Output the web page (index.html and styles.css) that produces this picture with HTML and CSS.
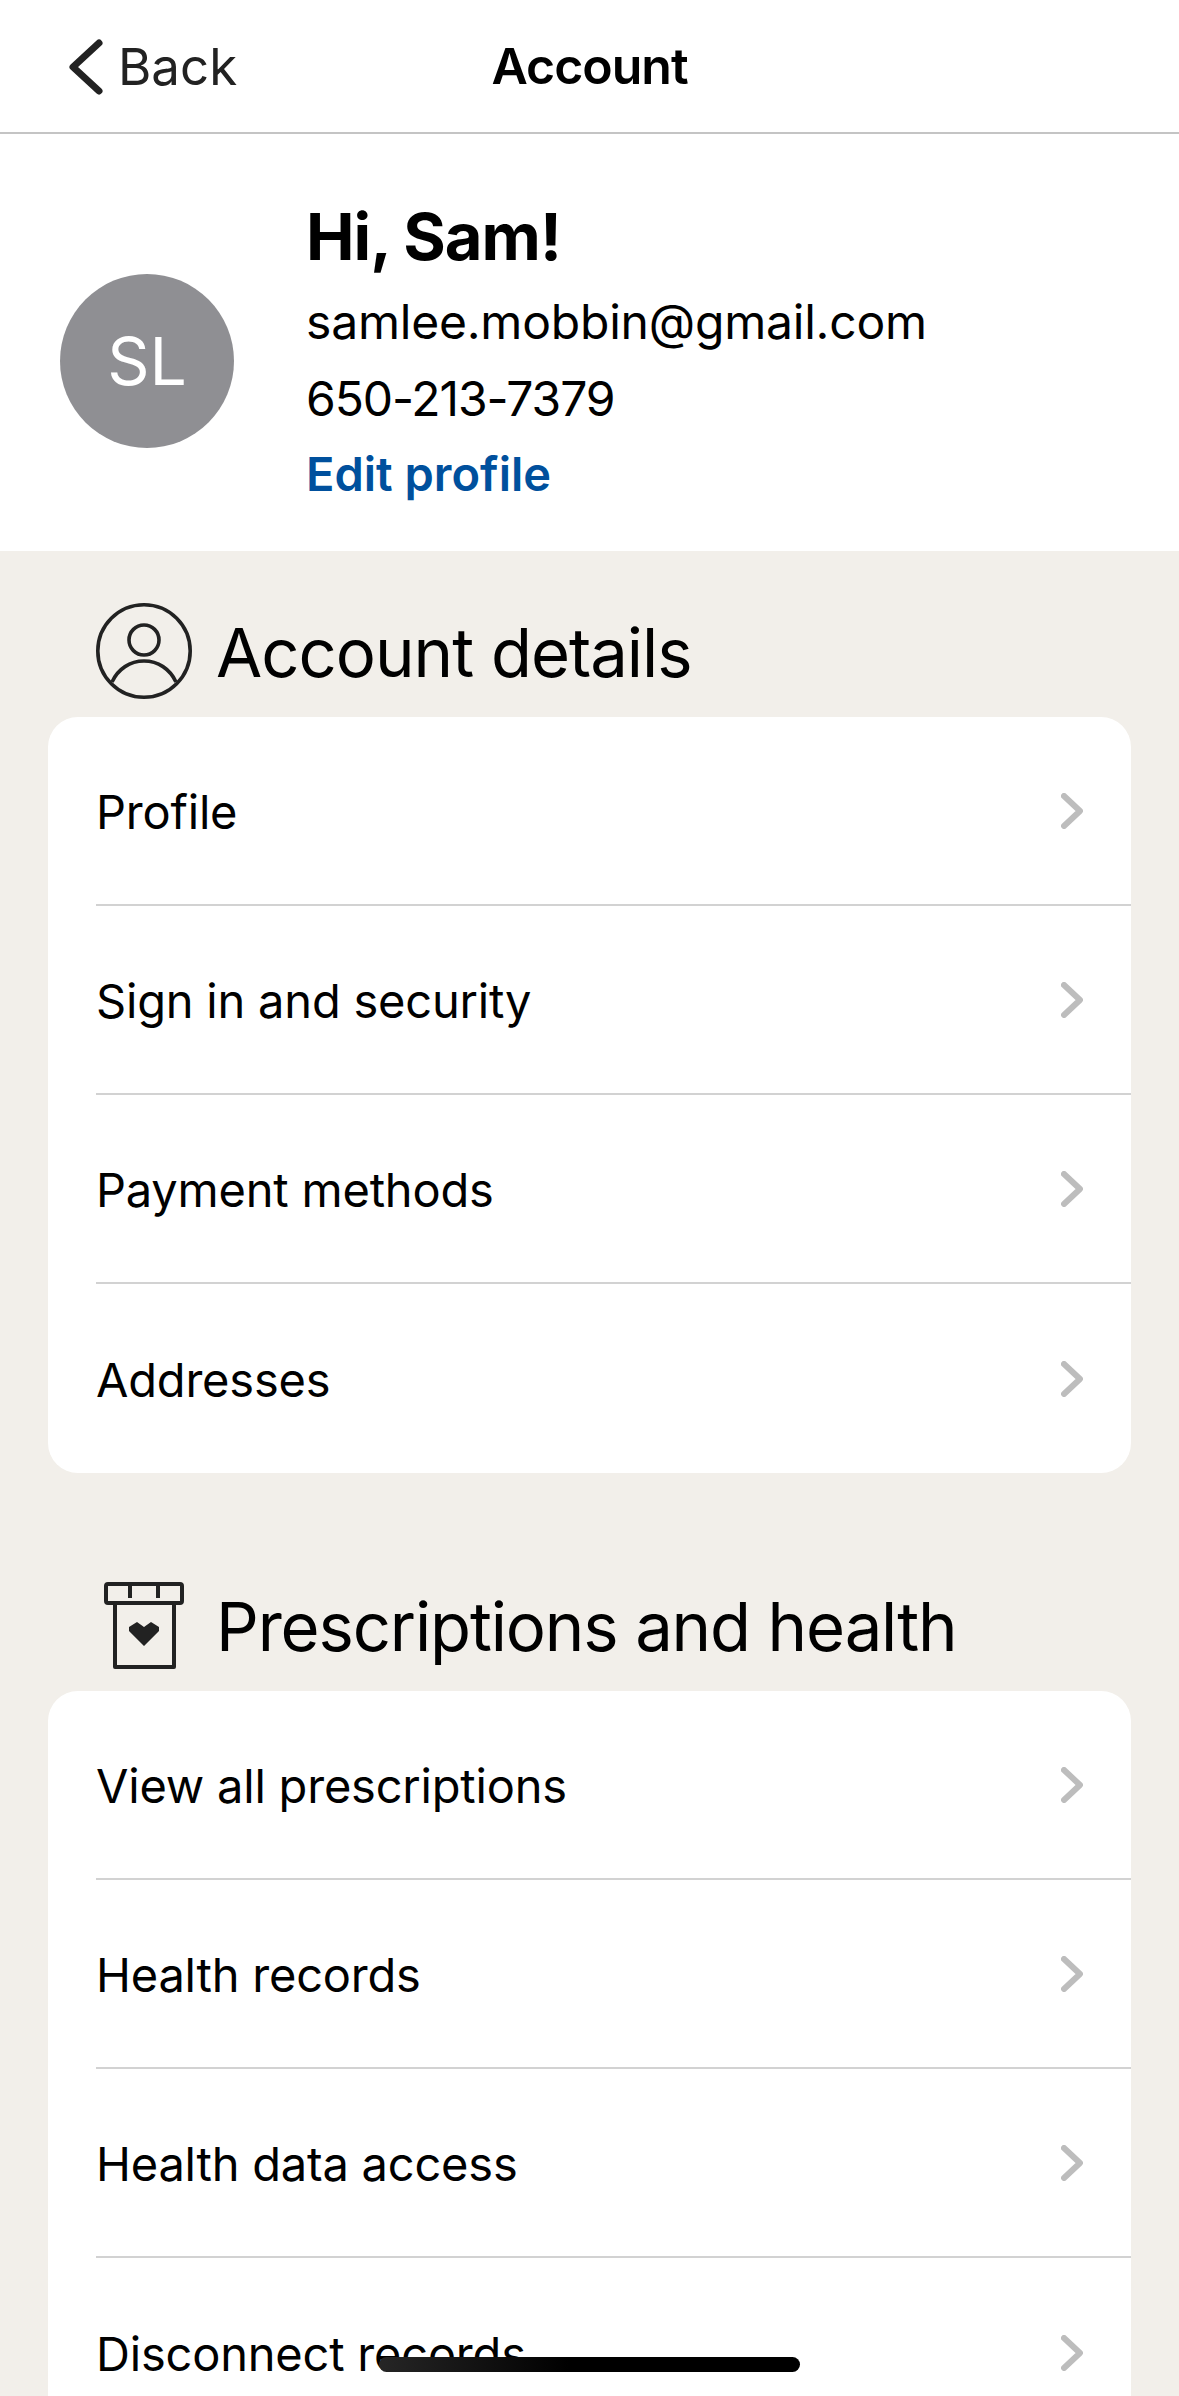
FILE: index.html
```html
<!DOCTYPE html>
<html lang="en">
<head>
  <meta charset="UTF-8" />
  <meta name="viewport" content="width=device-width, initial-scale=1.0"/>
  <title>Account</title>
  <link rel="stylesheet" href="styles.css">
</head>
<body>

<div class="screen">
  <div class="topbar">
    <a class="back">
      <svg class="back-icon" viewBox="0 0 36 56" fill="none" stroke="#222" stroke-width="7" stroke-linecap="round" stroke-linejoin="round">
        <path d="M31 4 L5 28 L31 52" />
      </svg>
      <span>Back</span>
    </a>
    <h1>Account</h1>
  </div>

  <div class="profile">
    <div class="avatar">SL</div>
    <div class="profile-info">
      <h2>Hi, Sam!</h2>
      <p class="email">samlee.mobbin@gmail.com</p>
      <p class="phone">650-213-7379</p>
      <a class="edit">Edit profile</a>
    </div>
  </div>

  <div class="content">
    <div class="section-title">
      <svg class="section-icon" viewBox="0 0 96 96" fill="none" stroke="#222" stroke-width="3.6">
        <circle cx="48" cy="48" r="46.2" />
        <circle cx="48" cy="37" r="15" />
        <path d="M16 79 C22 66 34 58 48 58 C62 58 74 66 80 79" />
      </svg>
      <h3>Account details</h3>
    </div>
    <div class="card">
      <div class="row"><span>Profile</span><svg class="chev" viewBox="0 0 22 36"><path d="M3 3 L19 18 L3 33" /></svg></div>
      <div class="row"><span>Sign in and security</span><svg class="chev" viewBox="0 0 22 36"><path d="M3 3 L19 18 L3 33" /></svg></div>
      <div class="row"><span>Payment methods</span><svg class="chev" viewBox="0 0 22 36"><path d="M3 3 L19 18 L3 33" /></svg></div>
      <div class="row"><span>Addresses</span><svg class="chev" viewBox="0 0 22 36"><path d="M3 3 L19 18 L3 33" /></svg></div>
    </div>

    <div class="section-title second">
      <svg class="section-icon" viewBox="0 0 96 96" fill="none" stroke="#222" stroke-width="4" stroke-linejoin="round">
        <rect x="10" y="6" width="76" height="19" rx="2" />
        <path d="M34 6 V20 M62 6 V20" />
        <path d="M19 25 V89 H78 V25" />
        <path d="M48 68 L33 53 V49 L41 44 L48 49 L55 44 L63 49 V53 Z" fill="#222" stroke="none" />
      </svg>
      <h3>Prescriptions and health</h3>
    </div>
    <div class="card">
      <div class="row"><span>View all prescriptions</span><svg class="chev" viewBox="0 0 22 36"><path d="M3 3 L19 18 L3 33" /></svg></div>
      <div class="row"><span>Health records</span><svg class="chev" viewBox="0 0 22 36"><path d="M3 3 L19 18 L3 33" /></svg></div>
      <div class="row"><span>Health data access</span><svg class="chev" viewBox="0 0 22 36"><path d="M3 3 L19 18 L3 33" /></svg></div>
      <div class="row"><span>Disconnect records</span><svg class="chev" viewBox="0 0 22 36"><path d="M3 3 L19 18 L3 33" /></svg></div>
    </div>
  </div>

  <div class="home-bar"></div>
</div>

</body>
</html>
```

FILE: styles.css
```css
* {
  box-sizing: border-box;
}

body {
  margin: 0;
  font-family: Inter, 'Liberation Sans', sans-serif;
  color: #000;
  background: #f2efea;
}

.screen {
  position: relative;
  width: 1179px;
  height: 2396px;
  overflow: hidden;
  background: #f2efea;
}

.topbar {
  position: relative;
  height: 134px;
  background: #fff;
  border-bottom: 2px solid #c4c4c4;
  display: flex;
  align-items: center;
  justify-content: center;
}

.topbar h1 {
  margin: 0;
  font-size: 50px;
  font-weight: 600;
  letter-spacing: -1px;
}

.back {
  position: absolute;
  left: 68px;
  top: 36px;
  display: flex;
  align-items: center;
  gap: 14px;
  font-size: 51px;
  color: #222;
}

.back-icon {
  width: 36px;
  height: 58px;
}

.profile {
  height: 417px;
  background: #fff;
  display: flex;
  align-items: center;
  padding-left: 60px;
  gap: 72px;
}

.avatar {
  width: 174px;
  height: 174px;
  margin-top: 36px;
  border-radius: 50%;
  background: #8f8f93;
  color: #fff;
  font-size: 66px;
  display: flex;
  align-items: center;
  justify-content: center;
}

.profile-info {
  margin-top: 13px;
}

.profile-info h2 {
  margin: 0 0 14px;
  font-size: 65px;
  font-weight: 700;
  letter-spacing: -1px;
}

.profile-info p {
  margin: 0;
  font-size: 48px;
  line-height: 63px;
}

.email {
  margin-bottom: 14px !important;
  letter-spacing: -0.2px;
}

.phone {
  margin-bottom: 15px !important;
  letter-spacing: -1.1px;
}

.edit {
  font-size: 47px;
  font-weight: 600;
  color: #00509d;
}

.content {
  padding: 0 48px;
}

.section-title {
  display: flex;
  align-items: center;
  gap: 24px;
  padding: 52px 0 18px 48px;
  height: 166px;
}

.section-title.second {
  height: 218px;
  padding-top: 106px;
}

.section-icon {
  width: 96px;
  height: 96px;
  flex-shrink: 0;
}

.section-title h3 {
  margin: 3px 0 0;
  font-size: 67px;
  font-weight: 400;
  letter-spacing: -1px;
}

.section-title.second h3 {
  margin: 0;
  letter-spacing: -1.15px;
}

.card {
  background: #fff;
  border-radius: 30px;
  padding-left: 48px;
}

.row {
  height: 189px;
  display: flex;
  align-items: center;
  justify-content: space-between;
  padding-right: 48px;
  border-bottom: 2px solid #d2d2d2;
  font-size: 47px;
  letter-spacing: -0.2px;
}

.row span {
  padding-top: 2px;
}

.row:last-child {
  border-bottom: none;
}

.chev {
  width: 22px;
  height: 36px;
  fill: none;
  stroke: #bdbdbd;
  stroke-width: 6;
  stroke-linecap: round;
  stroke-linejoin: round;
}

.home-bar {
  position: absolute;
  left: 379px;
  top: 2357px;
  width: 421px;
  height: 15px;
  border-radius: 8px;
  background: linear-gradient(to right, #262626, #000 45%);
}
```
